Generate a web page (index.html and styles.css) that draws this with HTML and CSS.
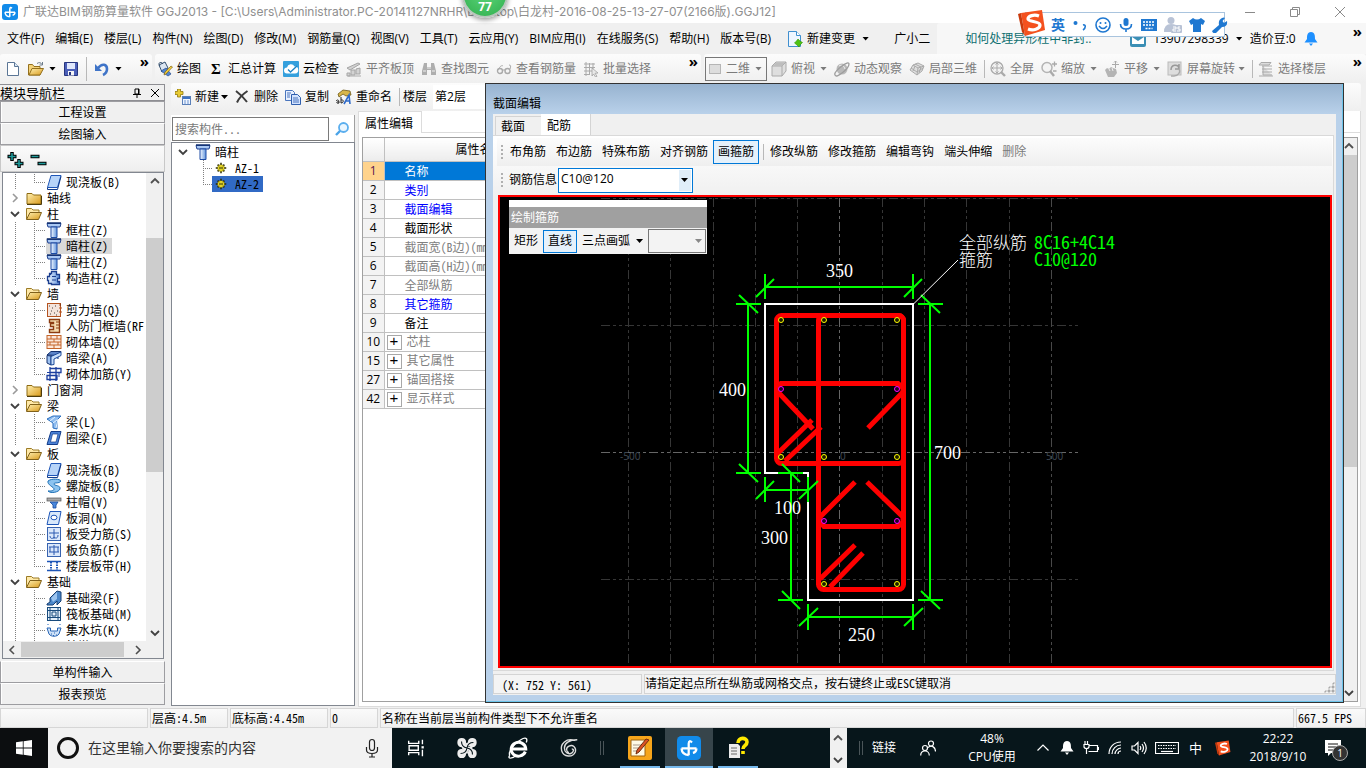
FILE: index.html
```html
<!DOCTYPE html>
<html lang="zh-CN">
<head>
<meta charset="utf-8">
<title>广联达BIM钢筋算量软件 GGJ2013</title>
<link rel="stylesheet" href="styles.css">
</head>
<body>
<svg class="defs" aria-hidden="true">
  <defs>
    <linearGradient id="gold" x1="0" y1="0" x2="1" y2="1"><stop offset="0" stop-color="#fff0b0"/><stop offset="1" stop-color="#d99a1c"/></linearGradient>
    <linearGradient id="steel" x1="0" y1="0" x2="1" y2="0"><stop offset="0" stop-color="#f4f9ff"/><stop offset="1" stop-color="#5f93dc"/></linearGradient>
  </defs>
  <symbol id="app" viewBox="0 0 16 16"><rect width="16" height="16" rx="3" fill="#118bea"/><path d="M3 8.300h10M10 4.300Q8 2.300 7.800 5v7.800M3 8.300q.3 4.200 4.800 4.500M13 8.300q-.2 2.600-2.400 3" fill="none" stroke="#fff" stroke-width="1.500"/></symbol>
  <symbol id="doc" viewBox="0 0 16 16"><path d="M2.500 1.500h7l4 4v9h-11z" fill="#fff" stroke="#5b7696"/><path d="M9.500 1.500v4h4" fill="#dbe8f5" stroke="#5b7696"/></symbol>
  <symbol id="docadd" viewBox="0 0 16 16"><path d="M1.500.5h8l4 4v11h-12z" fill="#eef6ff" stroke="#3f8fcf"/><path d="M9.500.5v4h4" fill="#fff" stroke="#3f8fcf"/><path d="M11 8l2 2 2.500 1.500-2 2-1.500 2.500-2-2L7.500 12l2-2z" fill="#4fc213" stroke="#2c9400" stroke-width=".6"/></symbol>
  <symbol id="open" viewBox="0 0 16 16"><path d="M.5 14V3.500h4l1.500 2h6V14z" fill="#f4d37a" stroke="#94701d"/><path d="M1 14l3-6.500h11.500L12 14z" fill="url(#gold)" stroke="#94701d"/><path d="M9 2.500c2-1.500 4-1 5 1M14.500 1v3h-3" fill="none" stroke="#6b7b8a"/></symbol>
  <symbol id="save" viewBox="0 0 16 16"><path d="M1.500 1.500h13v13h-13z" fill="#4b5fb8" stroke="#27357e"/><path d="M4 2h8v6H4z" fill="#dfe7fb"/><path d="M5 10h6v4.500H5z" fill="#f5f5f5"/><path d="M6 11h2v3H6z" fill="#27357e"/></symbol>
  <symbol id="undo" viewBox="0 0 16 16"><path d="M4 7c4-5 9-4 9 1 0 3-2 5-4 6" fill="none" stroke="#3f74c8" stroke-width="2.600"/><path d="M1 3v7h7z" fill="#3f74c8"/></symbol>
  <symbol id="draw" viewBox="0 0 16 16"><path d="M2 4l6-3 3 6-6 4z" fill="#dce6f2" stroke="#35506f"/><path d="M3 5c-3-3 1-5 3-2" fill="none" stroke="#35506f"/><path d="M4 10l5-3 5 6-3 2z" fill="#5185cf" stroke="#2b4e8e" stroke-width=".7"/><path d="M15.500 6L9 13l-2 1 1-3 6-6z" fill="#f2cf3a" stroke="#80631a" stroke-width=".7"/></symbol>
  <symbol id="cloud" viewBox="0 0 16 16"><rect width="16" height="16" rx="1" fill="#35a0dd"/><path d="M4 12.500a3 3 0 0 1 0-6 4 4 0 0 1 7.500-1 3.500 3.500 0 0 1 .5 7z" fill="#fff"/><path d="M5 8.500l2.500 2.500L14 5" fill="none" stroke="#1c84c6" stroke-width="1.300"/></symbol>
  <symbol id="level" viewBox="0 0 16 16"><path d="M1 7l11-5 2 1-10 6zM5 9h4v5H5zM10 8l4-1v6h-4zM1 12h3v3H1z" fill="#d2d2d2" stroke="#a5a5a5"/><path d="M2 15h13" stroke="#aaa"/></symbol>
  <symbol id="bino" viewBox="0 0 16 16"><path d="M3 2h3v4h4V2h3l2 8v4h-5V9H6v5H1v-4z" fill="#aeaeae"/><path d="M2 10h3M11 10h3M6 7h4" stroke="#eee"/></symbol>
  <symbol id="glass" viewBox="0 0 16 16"><path d="M2 9c2-4 4-5 5-4M14 8c1-3 1-4-1-4" stroke="#aaa" fill="none"/><circle cx="4" cy="10" r="2.500" fill="none" stroke="#aaa" stroke-width="1.400"/><circle cx="11.500" cy="10" r="2.500" fill="none" stroke="#aaa" stroke-width="1.400"/><path d="M6.500 9h2.500" stroke="#aaa"/></symbol>
  <symbol id="batch" viewBox="0 0 16 16"><path d="M1 3h11M1 6.500h11M1 10h8M1 13.500h6M3 1v14M6.500 2v12M10 2v6" stroke="#aaa" fill="none"/><path d="M9 7l6 5-3 .3 2 3-1.500.7-2-3-1.500 2z" fill="#e8e8e8" stroke="#999" stroke-width=".7"/></symbol>
  <symbol id="cube" viewBox="0 0 16 16"><path d="M1 5l4-4h10v9l-4 5H1z" fill="#dedede" stroke="#aaa"/><path d="M1 5h10v10M11 5l4-4" fill="none" stroke="#aaa"/><path d="M2 5l3-3.500h9L11 5z" fill="#bdbdbd"/></symbol>
  <symbol id="orbit" viewBox="0 0 16 16"><circle cx="8" cy="8" r="5.500" fill="#b9b9b9"/><path d="M5 5c3-2 5 0 6 3" fill="none" stroke="#eee"/><path d="M1 14c-1-2 3-6 7-9s7-4 7-2-3 6-7 9-6 4-7 2z" fill="none" stroke="#9d9d9d" stroke-width="1.300"/></symbol>
  <symbol id="part" viewBox="0 0 16 16"><path d="M1 9l3-5 5-2 6 3-2 5-5 4z" fill="#dedede" stroke="#aaa"/><path d="M4 4l5 3 6-2M9 7l-1 7M2 7l6 4 6-4M6 3l6 3-2 6M4 10l2-5" fill="none" stroke="#aaa"/></symbol>
  <symbol id="full" viewBox="0 0 16 16"><circle cx="7" cy="7" r="6" fill="#f2f2f2" stroke="#aaa" stroke-width="1.300"/><path d="M7 2v10M2 7h10M5.500 3.500L7 2l1.500 1.500M5.500 10.500L7 12l1.500-1.500M3.500 5.500L2 7l1.500 1.500M10.500 5.500L12 7l-1.500 1.500" fill="none" stroke="#aaa"/><path d="M11 11l4 4" stroke="#aaa" stroke-width="2.400"/></symbol>
  <symbol id="zoomi" viewBox="0 0 16 16"><circle cx="6" cy="6.500" r="5" fill="#f4f4f4" stroke="#b4b4b4" stroke-width="1.500"/><path d="M9 10l4 5" stroke="#aaa" stroke-width="2.400"/><path d="M11 3h5M13.500.5v5M12 10h3.500" stroke="#aaa" stroke-width="1.300"/></symbol>
  <symbol id="hand" viewBox="0 0 16 16"><path d="M1 9l2-2 2 1 2-2 2 1 3 1 1 4-3 4H4z" fill="#b4b4b4"/><path d="M11.500 0v7M8 3.500h7M10 1.500L11.500 0 13 1.500" fill="none" stroke="#aaa"/><path d="M5 8l1 2M8 7l1 3" stroke="#eee"/></symbol>
  <symbol id="rot" viewBox="0 0 16 16"><rect x="1" y="1" width="13" height="13" fill="#ddd" stroke="#bbb"/><path d="M4 9c0-6 7-6 8-2M12 3v5H8" fill="none" stroke="#999" stroke-width="1.500"/><path d="M12 8c2 3-1 7-5 7H4" fill="none" stroke="#aaa" stroke-width="1.300"/></symbol>
  <symbol id="floors" viewBox="0 0 16 16"><path d="M3 1.500h10L11 4H1zM4 5h10M4 8h10M4 11h10M5 5v9h9" fill="#ddd" stroke="#aaa"/><path d="M1 15h14" stroke="#aaa"/></symbol>
  <symbol id="new" viewBox="0 0 16 16"><path d="M2.500 0h3v2.500H8v3H5.500V8h-3V5.500H0v-3h2.500z" fill="#e9cb34" stroke="#91780e" stroke-width=".8"/><rect x="7.500" y="7.500" width="8" height="8" fill="#eef4ff" stroke="#5a7fb8"/><path d="M8 9h7" stroke="#3c72c4" stroke-width="2"/><path d="M9 12h2M12 12h2M9 14h2M12 14h2" stroke="#6d94cf"/></symbol>
  <symbol id="del" viewBox="0 0 16 16"><path d="M2 2c4 3 8 7 11 11M13.500 2C9 5 5 9 3 13.500" fill="none" stroke="#3c3c3c" stroke-width="2"/></symbol>
  <symbol id="copy" viewBox="0 0 16 16"><path d="M.5 1.500h7l2 2v8h-9z" fill="#e8f0ff" stroke="#4a75bd"/><path d="M6.500 5.500h6l3 3v7h-9z" fill="#d3e3ff" stroke="#2f5fae"/><path d="M2 4h4M2 6h3M2 8h3M8 9h5M8 11h6M8 13h6" stroke="#4a75bd"/></symbol>
  <symbol id="ren" viewBox="0 0 16 16"><path d="M2 5l5-4 7 1 1 4-5 1-3-2-4 3z" fill="#d8b64a" stroke="#6d5816" stroke-width=".8"/><path d="M0 12c2-2 3-1 3 2-3 1-3-2 0-1M5 8v6c3 0 3-4 0-3" fill="none" stroke="#222"/><path d="M8 15l5-9 1 9M10 12h4" fill="none" stroke="#2e6ac9" stroke-width="1.600"/></symbol>
  <symbol id="mag" viewBox="0 0 16 16"><path d="M2 14l5-5" stroke="#4aa3e8" stroke-width="2.400"/><circle cx="9.500" cy="6.500" r="4.500" fill="#eaf6ff" stroke="#5aaeee" stroke-width="1.800"/></symbol>
  <symbol id="fold" viewBox="0 0 16 16"><path d="M1 3.500h5l1.500 1.500h7.500v9H1z" fill="url(#gold)" stroke="#8d6a12"/><path d="M1 14.500h14.500V6" fill="none" stroke="#4d3b0c"/></symbol>
  <symbol id="foldo" viewBox="0 0 16 16"><path d="M.5 13V2.500h5L7 4h6v3" fill="#ffe9a8" stroke="#9b7b26"/><path d="M.5 13.500L4 6.500h11.500L12.500 13.500z" fill="url(#gold)" stroke="#80611a"/></symbol>
  <symbol id="chev" viewBox="0 0 10 10"><path d="M1 3l4 4 4-4" fill="none" stroke="#404040" stroke-width="1.800"/></symbol>
  <symbol id="chevu" viewBox="0 0 10 10"><path d="M1 7l4-4 4 4" fill="none" stroke="#505050" stroke-width="1.800"/></symbol>
  <symbol id="chevr" viewBox="0 0 10 10"><path d="M3 1l4 4-4 4" fill="none" stroke="#9a9a9a" stroke-width="1.600"/></symbol>
  <symbol id="chevl" viewBox="0 0 10 10"><path d="M7 1L3 5l4 4" fill="none" stroke="#505050" stroke-width="1.600"/></symbol>
  <symbol id="col" viewBox="0 0 16 16"><path d="M1 1.500h14l-1 3.500H2z" fill="#a9c8f3" stroke="#1c3f8f"/><path d="M5 5h6v10.500H5z" fill="url(#steel)" stroke="#1c4ba5"/><path d="M1 1h14" stroke="#12306f" stroke-width="1.500"/></symbol>
  <symbol id="gcol" viewBox="0 0 16 16"><path d="M5.500 1.500h5v3h3v4h-2v3h2v3h-8v-1h-3v-3h-1v-4h2v-3h2z" fill="url(#steel)" stroke="#1c3f8f" stroke-width="1.300"/><path d="M6 6.500h4M6 10h4M3 4.500h2M11 12h3" stroke="#1c3f8f"/></symbol>
  <symbol id="slab" viewBox="0 0 16 16"><path d="M5 1.500h10L11.500 13.500H1.500z" fill="#b7d4f8" stroke="#1e56b8"/><path d="M1.500 13.500v2h10l3.500-13" fill="none" stroke="#123c8a"/></symbol>
  <symbol id="wall" viewBox="0 0 16 16"><rect x="1.500" y="1.500" width="13" height="13" fill="#f4e4dc" stroke="#b5531f"/><path d="M3 4h1M6 6h1M9 4h1M5 9h1M8 11h1M4 12h1M11 9h1M10 13h1" stroke="#444"/><path d="M14 1v3h1M13 6h3M13 10h3" stroke="#b5531f"/></symbol>
  <symbol id="rfw" viewBox="0 0 16 16"><path d="M3.500 1.500h10v13h-10v-3h4v-3h-3v-3h3v-1h-4z" fill="#f5dcae" stroke="#8c3c11" stroke-width="1.400"/><path d="M10 4h3M10 7h3M10 10h3" stroke="#8c3c11"/></symbol>
  <symbol id="brick" viewBox="0 0 16 16"><rect x="1" y="1.500" width="14" height="13" fill="#fbe7da" stroke="#c4642a"/><path d="M1 5h14M1 8h14M1 11h14M5 2v3M11 2v3M8 5v3M4 8v3M12 8v3M8 11v3" stroke="#c4642a"/></symbol>
  <symbol id="beam" viewBox="0 0 16 16"><path d="M1 5l4-3.500h10l-3 4z" fill="#5c84c8" stroke="#14316e"/><path d="M1 5.500l4 .5v9l-4-2zM5 6l7-.5V9" fill="#9ec2f2" stroke="#14316e"/><path d="M5 6.500l10-4.500v3.500L8 9v5.500l-3 .5z" fill="#c8defa" stroke="#1d4a9a"/></symbol>
  <symbol id="rein" viewBox="0 0 16 16"><path d="M4 2.500h11v4H4zM1 9.500h10v4H1zM4 1v14M10 1v14" fill="none" stroke="#1c3f9f" stroke-width="1.300"/><path d="M1 6.500h14M13 6v5" stroke="#1c3f9f"/></symbol>
  <symbol id="beam2" viewBox="0 0 16 16"><path d="M1 5l6-3h8l-4 4v9l-4-1V9L4 7z" fill="#8fbdf0" stroke="#2a6fc0"/><path d="M7 9l4-3M4 7l5-4M12 5l-2 9" stroke="#e8f4ff"/></symbol>
  <symbol id="ring" viewBox="0 0 16 16"><path d="M5 1.500h10L11.500 14.500H1z" fill="#4b82d6" stroke="#123c8a"/><path d="M6.500 4h5.500l-2 8H4.500z" fill="#fff" stroke="#123c8a" stroke-width=".7"/></symbol>
  <symbol id="spiral" viewBox="0 0 16 16"><path d="M2 3c4-3 12-2 13 0-2 3-7 1-7 3s7 1 6 5c-1 3-9 5-12 2 3 0 6 0 6-2S1 7 2 3z" fill="#8cc4f0" stroke="#1c6fb5"/></symbol>
  <symbol id="cap" viewBox="0 0 16 16"><rect x="1" y="4" width="14" height="3" fill="#a9a9a9" stroke="#555" stroke-width=".7"/><path d="M4 8h8l-2 3v3H7v-3z" fill="#4a88dc" stroke="#174a9c" stroke-width=".8"/></symbol>
  <symbol id="hole" viewBox="0 0 16 16"><path d="M4 1.500h11L12.500 14.500H1z" fill="#d8e8fb" stroke="#1e56b8"/><ellipse cx="8" cy="7.500" rx="3" ry="2.300" fill="#fff" stroke="#1e56b8"/></symbol>
  <symbol id="sbar" viewBox="0 0 16 16"><rect x="1.500" y="1.500" width="13" height="13" fill="#dbe8fb" stroke="#3763b0"/><path d="M3 7h10M8 3v10M4 10c0 3 3 3 4 1M12 9c0 3-2 4-4 2" fill="none" stroke="#2a58b0"/></symbol>
  <symbol id="nbar" viewBox="0 0 16 16"><rect x="1.500" y="1.500" width="13" height="13" fill="#dbe8fb" stroke="#3763b0"/><path d="M3 5h10M3 10h10M8 3v10M4 5v5M12 5v5" stroke="#2a58b0"/></symbol>
  <symbol id="strip" viewBox="0 0 16 16"><path d="M1 3.500h14M1 12.500h14" stroke="#1e56b8" stroke-width="1.600"/><path d="M5 4v8M11 4v8" stroke="#1e56b8" stroke-width="2" stroke-dasharray="1.500 1"/></symbol>
  <symbol id="fbeam" viewBox="0 0 16 16"><path d="M1 14l3-2V8l7-7 4 1v9l-4 4v-4l-4 4H1z" fill="#4b87c9" stroke="#173f73"/><path d="M5 8l6-6v7l-4 3z" fill="#9cc4ee"/></symbol>
  <symbol id="raft" viewBox="0 0 16 16"><rect x="1.500" y="1.500" width="13" height="13" fill="#e3effa" stroke="#174a7c"/><path d="M4 2v12M12 2v12M2 4.500h12M2 11.500h12M6 6h4v4H6z" fill="none" stroke="#174a7c"/></symbol>
  <symbol id="pit" viewBox="0 0 16 16"><path d="M1 6h3.500v3h7V6H15l-2 6c-2 3-8 3-10 0z" fill="#cfe2f8" stroke="#2865b5"/><path d="M5 12h1M8 11h1M10 13h1M7 13.500h1" stroke="#2865b5"/><path d="M1 2.500h2M13 2.500h2" stroke="#8cb0dd"/></symbol>
  <symbol id="gear" viewBox="0 0 16 16"><path d="M8 1v14M1 8h14M3.500 3.500l9 9M12.500 3.500l-9 9" stroke="#2a2a00" stroke-width="2"/><circle cx="8" cy="8" r="4.500" fill="#ffee2e" stroke="#5a5200" stroke-width=".8"/><path d="M6.500 6v4M9.500 6v4M6 8h4" stroke="#1b1b00" stroke-width=".9"/></symbol>
  <symbol id="bell" viewBox="0 0 16 16"><path d="M8 1c4 0 4 4 4 7l2.500 3.500H1.500L4 8c0-3 0-7 4-7zM6 12.500h4L8 15z" fill="currentColor"/></symbol>
  <symbol id="sogou" viewBox="0 0 28 28"><path d="M3 4l21-3 3 20-20 6z" fill="#f4511e"/><path d="M3 4l4 23-3-4L0 5z" fill="#c93a0c"/><path d="M21 7c-5-2-11 0-11 3s12 2 12 6-7 6-12 4" fill="none" stroke="#fff" stroke-width="3.200"/></symbol>
</svg>

<header class="titlebar">
  <svg class="i16"><use href="#app"/></svg>
  <h1>广联达BIM钢筋算量软件 GGJ2013 - [C:\Users\Administrator.PC-20141127NRHR\Desktop\白龙村-2016-08-25-13-27-07(2166版).GGJ12]</h1>
  <div class="winctl">
    <button aria-label="最小化"><svg viewBox="0 0 12 12"><path d="M1 6.500h10"/></svg></button>
    <button aria-label="还原"><svg viewBox="0 0 12 12"><path d="M1.500 3.500h7v7h-7zM3.500 3V1.500h7v7H9"/></svg></button>
    <button aria-label="关闭"><svg viewBox="0 0 12 12"><path d="M1 1l10 10M11 1L1 11"/></svg></button>
  </div>
  <div class="ball">77</div>
</header>

<nav class="menubar">
  <button>文件(F)</button><button>编辑(E)</button><button>楼层(L)</button><button>构件(N)</button><button>绘图(D)</button><button>修改(M)</button><button>钢筋量(Q)</button><button>视图(V)</button><button>工具(T)</button><button>云应用(Y)</button><button>BIM应用(I)</button><button>在线服务(S)</button><button>帮助(H)</button><button>版本号(B)</button>
  <button class="tool"><svg class="i16"><use href="#docadd"/></svg>新建变更<i class="caret"></i></button>
  <button class="user">广小二</button>
  <div class="news"><a href="#news">如何处理异形柱中非封..</a></div>
  <div class="account">
    <svg class="i16" viewBox="0 0 16 16"><rect width="16" height="16" rx="2" fill="#3b8fb5"/><path d="M2 6l6 4 6-4v7H2z" fill="#fff"/></svg>
    <button class="tool phone">13907298339<i class="caret"></i></button>
    <button>造价豆:0</button>
    <svg class="i16 bell"><use href="#bell"/></svg>
    <b class="more">»</b>
  </div>
</nav>

<div class="toolrow">
  <div class="band b1">
    <button class="tool" aria-label="新建工程"><svg class="i16"><use href="#doc"/></svg></button>
    <button class="tool" aria-label="打开"><svg class="i16"><use href="#open"/></svg><i class="caret"></i></button>
    <button class="tool" aria-label="保存"><svg class="i16"><use href="#save"/></svg></button>
    <span class="sep"></span>
    <button class="tool" aria-label="撤销"><svg class="i16"><use href="#undo"/></svg><i class="caret"></i></button>
    <b class="more">»</b>
  </div>
  <div class="band b2">
    <button class="tool"><svg class="i16"><use href="#draw"/></svg>绘图</button>
    <button class="tool"><b class="sigma">Σ</b>汇总计算</button>
    <button class="tool"><svg class="i16"><use href="#cloud"/></svg>云检查</button>
    <button class="tool" disabled><svg class="i16"><use href="#level"/></svg>平齐板顶</button>
    <button class="tool" disabled><svg class="i16"><use href="#bino"/></svg>查找图元</button>
    <button class="tool" disabled><svg class="i16"><use href="#glass"/></svg>查看钢筋量</button>
    <button class="tool" disabled><svg class="i16"><use href="#batch"/></svg>批量选择</button>
    <b class="more">»</b>
  </div>
  <div class="band b3">
    <label class="dim"><span class="chip"></span><select aria-label="视图模式" disabled><option>二维</option></select><i class="caret"></i></label>
    <button class="tool" disabled><svg class="i16"><use href="#cube"/></svg>俯视<i class="caret far"></i></button>
    <button class="tool" disabled><svg class="i16"><use href="#orbit"/></svg>动态观察</button>
    <button class="tool" disabled><svg class="i16"><use href="#part"/></svg>局部三维</button>
    <span class="sep"></span>
    <button class="tool" disabled><svg class="i16"><use href="#full"/></svg>全屏</button>
    <button class="tool" disabled><svg class="i16"><use href="#zoomi"/></svg>缩放<i class="caret far"></i></button>
    <button class="tool" disabled><svg class="i16"><use href="#hand"/></svg>平移<i class="caret far"></i></button>
    <button class="tool tight" disabled><svg class="i16"><use href="#rot"/></svg>屏幕旋转<i class="caret"></i></button>
    <span class="sep"></span>
    <button class="tool" disabled><svg class="i16"><use href="#floors"/></svg>选择楼层</button>
    <b class="more">»</b>
  </div>
</div>

<main class="work">
  <aside class="dock">
    <div class="dockhead"><span>模块导航栏</span>
      <svg viewBox="0 0 10 10"><path d="M3 1h4v5H3zM1 6.500h8M5 7v3M6.500 1v5" fill="none" stroke="#000"/></svg>
      <svg viewBox="0 0 10 10"><path d="M1 1l8 8M9 1L1 9" stroke="#000"/></svg>
    </div>
    <button class="modbtn">工程设置</button>
    <button class="modbtn">绘图输入</button>
    <div class="treetools">
      <svg viewBox="0 0 44 16"><path d="M5 0v9M.5 4.500h9M12 7v9M7.500 11.500h9M23.500 4.500h9M30.500 11.500h9" stroke="#000" stroke-width="3.500"/><path d="M5 1v7M1.500 4.500h7M12 8v7M8.500 11.500h7M24.500 4.500h7M31.500 11.500h7" stroke="#1f9a9a" stroke-width="1.600"/></svg>
    </div>
    <div class="treebox">
      <ul class="tree">
        <li class="leaf last"><svg class="i16"><use href="#slab"/></svg>现浇板(B)</li>
        <li class="grp"><svg class="tw"><use href="#chevr"/></svg><svg class="i16"><use href="#fold"/></svg>轴线</li>
        <li class="grp"><svg class="tw"><use href="#chev"/></svg><svg class="i16"><use href="#foldo"/></svg>柱</li>
        <li class="leaf"><svg class="i16"><use href="#col"/></svg>框柱(Z)</li>
        <li class="leaf"><span class="cur"><svg class="i16"><use href="#col"/></svg>暗柱(Z)</span></li>
        <li class="leaf"><svg class="i16"><use href="#col"/></svg>端柱(Z)</li>
        <li class="leaf last"><svg class="i16"><use href="#gcol"/></svg>构造柱(Z)</li>
        <li class="grp"><svg class="tw"><use href="#chev"/></svg><svg class="i16"><use href="#foldo"/></svg>墙</li>
        <li class="leaf"><svg class="i16"><use href="#wall"/></svg>剪力墙(Q)</li>
        <li class="leaf"><svg class="i16"><use href="#rfw"/></svg>人防门框墙(RF</li>
        <li class="leaf"><svg class="i16"><use href="#brick"/></svg>砌体墙(Q)</li>
        <li class="leaf"><svg class="i16"><use href="#beam"/></svg>暗梁(A)</li>
        <li class="leaf last"><svg class="i16"><use href="#rein"/></svg>砌体加筋(Y)</li>
        <li class="grp"><svg class="tw"><use href="#chevr"/></svg><svg class="i16"><use href="#fold"/></svg>门窗洞</li>
        <li class="grp"><svg class="tw"><use href="#chev"/></svg><svg class="i16"><use href="#foldo"/></svg>梁</li>
        <li class="leaf"><svg class="i16"><use href="#beam2"/></svg>梁(L)</li>
        <li class="leaf last"><svg class="i16"><use href="#ring"/></svg>圈梁(E)</li>
        <li class="grp"><svg class="tw"><use href="#chev"/></svg><svg class="i16"><use href="#foldo"/></svg>板</li>
        <li class="leaf"><svg class="i16"><use href="#slab"/></svg>现浇板(B)</li>
        <li class="leaf"><svg class="i16"><use href="#spiral"/></svg>螺旋板(B)</li>
        <li class="leaf"><svg class="i16"><use href="#cap"/></svg>柱帽(V)</li>
        <li class="leaf"><svg class="i16"><use href="#hole"/></svg>板洞(N)</li>
        <li class="leaf"><svg class="i16"><use href="#sbar"/></svg>板受力筋(S)</li>
        <li class="leaf"><svg class="i16"><use href="#nbar"/></svg>板负筋(F)</li>
        <li class="leaf last"><svg class="i16"><use href="#strip"/></svg>楼层板带(H)</li>
        <li class="grp"><svg class="tw"><use href="#chev"/></svg><svg class="i16"><use href="#foldo"/></svg>基础</li>
        <li class="leaf"><svg class="i16"><use href="#fbeam"/></svg>基础梁(F)</li>
        <li class="leaf"><svg class="i16"><use href="#raft"/></svg>筏板基础(M)</li>
        <li class="leaf"><svg class="i16"><use href="#pit"/></svg>集水坑(K)</li>
        <li class="leaf"><svg class="i16"><use href="#cap"/></svg>柱墩(Y)</li>
      </ul>
      <div class="vbar"><svg><use href="#chevu"/></svg><span class="track"><i class="thumb t-tree"></i></span><svg><use href="#chev"/></svg></div>
      <div class="hbar"><svg><use href="#chevl"/></svg><span class="track"><i class="thumb"></i></span><svg class="dark"><use href="#chevr"/></svg></div>
    </div>
    <button class="modbtn">单构件输入</button>
    <button class="modbtn">报表预览</button>
  </aside>

  <section class="right">
    <div class="band comptools">
      <button class="tool near"><svg class="i16"><use href="#new"/></svg>新建<i class="caret"></i></button>
      <button class="tool"><svg class="i16"><use href="#del"/></svg>删除</button>
      <button class="tool"><svg class="i16"><use href="#copy"/></svg>复制</button>
      <button class="tool"><svg class="i16"><use href="#ren"/></svg>重命名</button>
      <span class="sep"></span>
      <label class="floor" for="floor">楼层</label>
      <select id="floor"><option>第2层</option></select>
    </div>
    <div class="cols">
      <div class="comp">
        <div class="search"><input type="text" placeholder="搜索构件..." aria-label="搜索构件"><button aria-label="搜索"><svg class="i16"><use href="#mag"/></svg></button></div>
        <ul class="ctree">
          <li class="root"><svg class="tw"><use href="#chev"/></svg><svg class="i16"><use href="#col"/></svg>暗柱</li>
          <li class="sub"><span><svg><use href="#gear"/></svg>AZ-1</span></li>
          <li class="sub last"><span class="sel"><svg><use href="#gear"/></svg>AZ-2</span></li>
        </ul>
      </div>
      <div class="props">
        <div class="tabs"><button class="tab">属性编辑</button></div>
        <div class="grid">
          <table>
            <colgroup><col class="cn"><col class="ca"><col></colgroup>
            <thead><tr><th></th><th>属性名称</th><th></th></tr></thead>
            <tbody>
              <tr class="on"><th>1</th><td>名称</td><td></td></tr>
              <tr class="key"><th>2</th><td>类别</td><td></td></tr>
              <tr class="key"><th>3</th><td>截面编辑</td><td></td></tr>
              <tr><th>4</th><td>截面形状</td><td></td></tr>
              <tr class="dis"><th>5</th><td>截面宽(B边)(mm)</td><td></td></tr>
              <tr class="dis"><th>6</th><td>截面高(H边)(mm)</td><td></td></tr>
              <tr class="dis"><th>7</th><td>全部纵筋</td><td></td></tr>
              <tr class="key"><th>8</th><td>其它箍筋</td><td></td></tr>
              <tr><th>9</th><td>备注</td><td></td></tr>
              <tr class="dis sum"><th>10</th><td>芯柱</td><td></td></tr>
              <tr class="dis sum"><th>15</th><td>其它属性</td><td></td></tr>
              <tr class="dis sum"><th>27</th><td>锚固搭接</td><td></td></tr>
              <tr class="dis sum"><th>42</th><td>显示样式</td><td></td></tr>
            </tbody>
          </table>
          <div class="vbar"><svg><use href="#chevu"/></svg><span class="track"><i class="thumb t-prop"></i></span><svg><use href="#chev"/></svg></div>
        </div>
      </div>
    </div>
  </section>

  <section class="dialog" role="dialog" aria-label="截面编辑">
    <h2>截面编辑</h2>
    <div class="dlgbody">
      <div class="dtabs"><button>截面</button><button class="act">配筋</button></div>
      <div class="dpanel">
        <div class="dtool">
          <i class="grip"></i>
          <button>布角筋</button><button>布边筋</button><button>特殊布筋</button><button>对齐钢筋</button><button class="down">画箍筋</button>
          <span class="sep"></span>
          <button>修改纵筋</button><button>修改箍筋</button><button>编辑弯钩</button><button>端头伸缩</button><button disabled>删除</button>
        </div>
        <div class="dtool second">
          <i class="grip"></i>
          <label for="bar">钢筋信息</label>
          <div class="combo"><input id="bar" type="text" value="C10@120"><button aria-label="展开"><i class="caret"></i></button></div>
        </div>
        <div class="canvas">
          <svg class="drawing" role="img" aria-label="柱截面配筋图">
            <g transform="translate(-500 -197)">
              <g class="gridl">
                <path d="M628.500 198V667M670.500 198V667M713.500 198V667M755.500 198V667M797.500 198V667M882.500 198V667M924.500 198V667M966.500 198V667M1009.500 198V667"/>
                <path d="M601 198.500H1079M601 325.500H1079M601 579.500H1079"/>
                <path class="axis" d="M839.500 198V667M601 452.500H1079"/>
                <path class="half" d="M1051.500 198V667"/>
              </g>
              <g class="ruler"><text x="620" y="460">-500</text><text x="840" y="460">0</text><text x="1046" y="460">500</text></g>
              <path class="outline" d="M765 304H913V600H808V473H765Z"/>
              <g class="rebar">
                <rect x="776.500" y="315.500" width="127" height="148" rx="5"/>
                <rect x="818.500" y="315.500" width="85" height="274" rx="5"/>
                <path d="M777 391V388L781 383.500H898L903 388V392L868 428M777 391L813 429"/>
                <path d="M777 454L812 420M785 461L821 427"/>
                <path d="M855 482L820 517V522L824 526.500H898L903 522V517L867 482"/>
                <path d="M820 579L855 545M830 587L863 553"/>
              </g>
              <g class="long">
                <circle cx="781" cy="320" r="2.500"/><circle cx="824" cy="320" r="2.500"/><circle cx="897" cy="320" r="2.500"/>
                <circle cx="781" cy="457" r="2.500"/><circle cx="824" cy="457" r="2.500"/><circle cx="897" cy="457" r="2.500"/>
                <circle cx="824" cy="584" r="2.500"/><circle cx="897" cy="584" r="2.500"/>
              </g>
              <g class="long side">
                <circle cx="781" cy="389" r="2.500"/><circle cx="897" cy="389" r="2.500"/><circle cx="824" cy="521" r="2.500"/><circle cx="897" cy="521" r="2.500"/>
              </g>
              <g class="dimline">
                <path d="M765 287H913M765 274V299M913 274V299M756 297L774 279M904 297L922 279"/>
                <path d="M748 304V473M736 304H761M736 473H761M739 295L758 313M739 464L758 482"/>
                <path d="M930 304V600M918 304H943M918 600H943M921 295L940 313M921 591L940 609"/>
                <path d="M808 617H913M808 604V630M913 604V630M799 626L818 608M904 626L923 608"/>
                <path d="M765 490H808M765 477V502M808 477V502M756 499L774 481M799 499L818 481"/>
                <path d="M791 473V600M778 473H803M778 600H803M782 464L800 482M782 591L800 609"/>
              </g>
              <path class="leader" d="M914 303.500L958 260"/>
              <g class="num"><text x="826" y="277">350</text><text x="719" y="396">400</text><text x="934" y="459">700</text><text x="774" y="514">100</text><text x="761" y="544">300</text><text x="848" y="641">250</text></g>
              <g class="note"><text x="959" y="249">全部纵筋</text><text x="959" y="266">箍筋</text></g>
              <g class="spec"><text x="1034" y="249">8C16+4C14</text><text x="1034" y="266">C10@120</text></g>
            </g>
          </svg>
          <div class="palette">
            <h3>绘制箍筋</h3>
            <div class="prow"><button>矩形</button><button class="down">直线</button><button class="arc">三点画弧<i class="caret"></i></button>
              <label class="pc"><select aria-label="箍筋类型"><option></option></select><i class="caret"></i></label></div>
          </div>
        </div>
      </div>
      <footer class="dstatus"><span class="xy">(X: 752 Y: 561)</span><span class="hint">请指定起点所在纵筋或网格交点，按右键终止或ESC键取消</span></footer>
    </div>
  </section>
</main>

<footer class="status">
  <span class="s1"></span><span class="s2">层高:4.5m</span><span class="s3">底标高:4.45m</span><span class="s4">0</span><span class="s5">名称在当前层当前构件类型下不允许重名</span><span class="s6">667.5 FPS</span>
</footer>

<div class="taskbar">
  <button class="start" aria-label="开始"><svg viewBox="0 0 16 16"><path d="M0 2.300L6.800 1.300V7.600H0zM7.600 1.200L16 0V7.600H7.600zM0 8.400H6.800V14.700L0 13.700zM7.600 8.400H16V16L7.600 14.800z" fill="#fff"/></svg></button>
  <div class="cortana"><i class="ringo"></i><input type="text" placeholder="在这里输入你要搜索的内容" aria-label="搜索"><svg viewBox="0 0 16 20"><rect x="5.500" y="1.500" width="5" height="11" rx="2.500" fill="none" stroke="#222" stroke-width="1.200"/><path d="M2.500 9v3q0 3.500 5.500 3.500t5.500-3.500V9M8 16v3M5 19h6" fill="none" stroke="#222" stroke-width="1.200"/></svg></div>
  <button class="tb" aria-label="任务视图"><svg viewBox="0 0 24 24"><path d="M4 4v3h11V4M4 20v-3h11v3M4.500 9.500h10v5h-10zM19 3v5M19 14v7" fill="none" stroke="#fff" stroke-width="1.500"/><path d="M18 10h2.500v2.500H18z" fill="#fff"/></svg></button>
  <button class="tb" aria-label="浏览器"><svg viewBox="0 0 24 24"><rect x="1.500" y="1" width="9.500" height="10" rx="4.500" fill="#eee"/><rect x="13" y="1" width="9.500" height="10" rx="4.500" fill="#eee"/><rect x="1.500" y="13" width="9.500" height="10" rx="4.500" fill="#eee"/><rect x="13" y="13" width="9.500" height="10" rx="4.500" fill="#eee"/><path d="M8 4v7q0 2 8 2v7M20 8h-7q-2 0-2 8H4" fill="none" stroke="#eee" stroke-width="4"/><path d="M6 5q0 6 6 7t6 7M19 6q-6 0-7 6t-7 6" fill="none" stroke="#07161b" stroke-width="1.200"/></svg></button>
  <button class="tb" aria-label="Internet Explorer"><svg viewBox="0 0 24 24"><path d="M20 16a8 7.500 0 1 1 .5-3H6" fill="none" stroke="#fff" stroke-width="3.200"/><path d="M3 20C0 24 6 24 10 20M15 3c5-3 8-2 6 3M3 20C1 16 8 7 15 3" fill="none" stroke="#fff" stroke-width="1.500"/></svg></button>
  <button class="tb" aria-label="GLODON"><svg viewBox="0 0 24 24"><path d="M19 4C9 0 2 8 4 15s12 8 15 1c1-5-3-8-7-6s-3 6 0 7M21 3C12 3 7 7 7 12s4 7 7 6 4-5 1-5" fill="none" stroke="#ddd" stroke-width="1.500"/></svg></button>
  <i class="dbl"></i>
  <button class="tb run note1" aria-label="记事"><svg viewBox="0 0 24 24"><rect width="24" height="24" rx="2" fill="#f6a51b"/><path d="M3 4h14v16H3z" fill="#fffbe6" stroke="#9c6512"/><path d="M5 9h9M5 12h9M5 15h7" stroke="#a98"/><path d="M21 4L11 16l-3 2 1-4L18 3z" fill="#dc5326" stroke="#6f2b10"/></svg></button>
  <button class="tb run active" aria-label="广联达"><svg viewBox="0 0 16 16"><use href="#app"/></svg></button>
  <button class="tb run" aria-label="帮助"><svg viewBox="0 0 24 24"><path d="M3 8h9l2 2v12H3z" fill="#ececec"/><path d="M5 12h6M5 15h6M5 18h6" stroke="#666"/><path d="M12 7c0-6 9-6 9-1 0 4-4 3-4 7M17 15v3" fill="none" stroke="#ffe900" stroke-width="3.600"/></svg></button>
  <div class="tscroll"><svg><use href="#chevu"/></svg><svg><use href="#chev"/></svg></div>
  <i class="dbl two"></i>
  <span class="links">链接</span>
  <svg class="ppl" viewBox="0 0 16 16"><circle cx="11" cy="3.500" r="2.500"/><circle cx="5" cy="8" r="2.500"/><path d="M.7 15.500c0-6 8.600-6 8.600 0M8 7.500c4-3 7.500 0 7.500 4"/></svg>
  <span class="cpu">48%<br>CPU使用</span>
  <div class="tray">
    <svg viewBox="0 0 16 16"><path d="M2.500 10.500L8 5l5.500 5.500"/></svg>
    <svg class="fillw" viewBox="0 0 16 16"><use href="#bell"/></svg>
    <svg viewBox="0 0 16 16"><path d="M5.500 5.500h9v6h-9M15.500 7v3M2 1v3M4.500 1v3M1 4.500h5v2q0 2-2.500 2T1 6.500zM3.500 9v5"/></svg>
    <svg viewBox="0 0 16 16"><path d="M2 14C2 7 7 2 14 2M5 14c0-5 4-9 9-9M8 14c0-3 3-6 6-6M11 14c0-2 1-3 3-3"/></svg>
    <svg viewBox="0 0 16 16"><path d="M1 6h2.500L7 2.500v11L3.500 10H1zM9 6q1.500 2 0 4M11 4q3 4 0 8M13 2q4.500 6 0 12"/></svg>
    <svg class="kb" viewBox="0 0 24 16"><path d="M.5 2.500h23v11H.5z"/><path d="M3 5.500h18M3 8.500h18" stroke-dasharray="1.500 1"/><path d="M6 11.500h12"/></svg>
  </div>
  <span class="zh">中</span>
  <svg class="sg"><use href="#sogou"/></svg>
  <time class="clock">22:22<br>2018/9/10</time>
  <div class="notif"><svg viewBox="0 0 16 16"><path d="M0 0h16v13H6l-3 3v-3H0z" fill="#fff"/><path d="M3 4h10M3 7h10M3 10h7" stroke="#111"/></svg><b>1</b></div>
</div>

<div class="ime">
  <svg class="logo"><use href="#sogou"/></svg>
  <b>英</b>
  <svg viewBox="0 0 16 16"><circle cx="3.500" cy="6" r="2" class="f"/><path d="M11 8c3-1 3 3 0 5" /></svg>
  <svg viewBox="0 0 16 16"><circle cx="8" cy="8" r="7"/><circle cx="5.500" cy="6" r="1" class="f"/><circle cx="10.500" cy="6" r="1" class="f"/><path d="M4 9q4 5 8 0"/></svg>
  <svg viewBox="0 0 16 16"><rect x="5.500" y="1" width="5" height="8" rx="2.500" class="f"/><path d="M2.500 7q0 5 5.500 5t5.500-5M8 12v3"/></svg>
  <svg viewBox="0 0 16 16"><path class="f" d="M0 2h16v12H0z"/><path d="M2 5h12M2 8h12M4.500 11.500h7" stroke="#fff" stroke-dasharray="2 1"/></svg>
  <svg viewBox="0 0 18 16" class="pale"><circle cx="7" cy="3.500" r="3.500"/><path d="M0 15q0-8 7-8 3 0 5 1H8v7z"/><rect x="7" y="8" width="11" height="8" rx="1"/><path d="M9 10h3v2H9v2h3M16 10h-2v2h2v2h-3" fill="none" stroke="#fff" stroke-width="1"/></svg>
  <svg viewBox="0 0 16 16"><path class="f" d="M4 1q4 3 8 0l4 3-2 4-2-1v8H4V7L2 8 0 4z"/></svg>
  <svg viewBox="0 0 16 16"><path class="f" d="M10 1q2-1 3 0l-2.500 3 1.500 2 3-2q1 6-5 6L4 16q-3 1-4-2l7-6Q6 3 10 1z"/></svg>
</div>
</body>
</html>
```

FILE: styles.css
```css
* { box-sizing: border-box; }
:root {
  --ui: "Open Sans", "Noto Sans CJK SC", sans-serif;
  --song: "Noto Sans Mono CJK SC", "Liberation Serif", "Noto Sans CJK SC", serif;
}
html, body { height: 100%; }
body {
  margin: 0; display: flex; flex-direction: column; position: relative; overflow: hidden;
  background: #f0f0f0; color: #000; font: 12px/16px var(--ui); white-space: nowrap;
}
button, input, select { font: inherit; color: inherit; margin: 0; padding: 0; border: 0; background: none; border-radius: 0; }
button { white-space: nowrap; }
select { appearance: none; opacity: 1; }
ul, h1, h2, h3 { margin: 0; padding: 0; list-style: none; font: inherit; }
svg { display: block; flex: none; }
.defs { position: absolute; width: 0; height: 0; }
.i16 { width: 16px; height: 16px; }
.caret { flex: none; width: 7px; height: 4px; background: currentColor; clip-path: polygon(0 0, 100% 0, 50% 100%); }
.sep { flex: none; width: 1px; height: 18px; background: #b8b8b8; }

/* title bar */
.titlebar { flex: none; position: relative; height: 23px; background: #fff; display: flex; align-items: center; padding: 0 20px 0 2px; gap: 5px; color: #8f8f8f; }
.titlebar h1 { font-family: Inter, "Noto Sans CJK SC", sans-serif; }
.winctl { margin-left: auto; display: flex; gap: 33px; }
.winctl svg { width: 12px; height: 12px; fill: none; stroke: #8a8a8a; }
.winctl button { display: flex; }
.ball { position: absolute; left: 462px; top: -28px; width: 46px; height: 46px; border-radius: 50%; border: 2px solid #b9c6bd; background: radial-gradient(circle at 50% 40%, #5fd77c, #2fae4d); box-shadow: 0 2px 5px #0006; color: #fff; font-weight: bold; text-align: center; padding-top: 25px; z-index: 2; }

/* menu bar */
.menubar { flex: none; height: 31px; display: flex; align-items: center; gap: 11px; padding-left: 7px; }
.tool { display: flex; align-items: center; gap: 4px; height: 22px; }
.menubar .tool:not(.phone) { margin-left: 5px; }
.menubar .caret { margin-left: 3px; }
.user { margin-left: 14px; }
.news { align-self: stretch; display: flex; align-items: center; width: 189px; margin-left: -4px; padding-left: 28px; background: #f7f7f7; border-radius: 3px 0 0 0; }
.news a { color: #0e6f70; text-decoration: none; }
.account { flex: 1; align-self: stretch; display: flex; align-items: center; gap: 7px; margin-left: -11px; padding: 0 4px; background: #f7f7f7; }
.account .bell { color: #1e90ff; }
.more { font-size: 15px; line-height: 12px; margin-left: auto; align-self: flex-start; padding-top: 2px; }

/* main tool bars */
.toolrow { flex: none; height: 29px; display: flex; gap: 3px; }
.band { display: flex; align-items: center; gap: 7px; padding: 0 3px; background: linear-gradient(#fcfcfc, #efefef); border-radius: 3px; }
.band .more { padding-top: 1px; }
.b1 { width: 152px; padding-left: 5px; }
.b1 .tool { gap: 5px; }
.b1 .sep { height: 24px; }
.b2 { width: 546px; padding-left: 2px; }
.b3 { flex: 1; padding: 0 4px 0 1px; }
.b3 .dim { margin-right: -3px; }
.b3 .sep { margin-right: -2px; }
.far { margin-left: 1px; }
.tight { gap: 3px; }
.tight svg { margin-right: 1px; }
button:disabled, .dim, .dim select { color: #7b7b7b; }
.sigma { width: 16px; text-align: center; font: bold 15px/16px "Liberation Serif", serif; }
.dim { display: flex; align-items: center; gap: 5px; width: 62px; height: 24px; padding: 0 4px 0 3px; border: 1px solid #777; }
.dim select { flex: 1; width: 24px; }
.chip { width: 14px; height: 10px; background: #ddd; border: 1px solid #b5b5b5; }

/* work area */
.work { flex: 1; min-height: 0; position: relative; display: flex; gap: 6px; }
.dock { flex: none; width: 165px; display: flex; flex-direction: column; padding-bottom: 2px; font-family: var(--song); }
.dockhead { flex: none; display: flex; align-items: center; height: 17px; margin-top: 1px; padding-right: 4px; gap: 8px; border: 1px solid #8e8e93; border-left: 0; font-size: 13px; line-height: 13px; }
.dockhead span { flex: 1; }
.dockhead svg { width: 10px; height: 10px; }
.modbtn { flex: none; height: 22px; border: 1px solid #9d9da1; border-top-color: #fff; box-shadow: inset 1px 0 #fff; background: #f0f0f0; }
.dockhead + .modbtn { border-top-color: #9d9da1; }
.treetools { flex: none; height: 27px; border: 1px solid #c8c8c8; display: flex; align-items: center; padding: 2px 6px 0; background: linear-gradient(#fbfbfb, #eee); }
.treetools svg { width: 44px; height: 16px; }
.treebox { flex: 1; min-height: 0; margin: 0 1px 2px 2px; display: grid; grid-template: minmax(0, 1fr) 17px / minmax(0, 1fr) 17px; border: 1px solid #828790; background: #fff; }
.tree { overflow: hidden; padding-top: 1px; }
.tree li { height: 16px; display: flex; align-items: center; gap: 4px; overflow: hidden; }
.tree .leaf, .sub {
  --v: repeating-linear-gradient(to bottom, #808080 0 1px, transparent 1px 2px);
  --h: repeating-linear-gradient(to right, #808080 0 1px, transparent 1px 2px);
}
.tree .leaf { padding-left: 43px; background: var(--v) 12px 0 / 1px 100% no-repeat, var(--v) 31px 0 / 1px 100% no-repeat, var(--h) 31px 8px / 11px 1px no-repeat; }
.tree .leaf.last { background-size: 1px 100%, 1px 8px, 11px 1px; }
.tree .cur { display: flex; gap: 4px; padding-right: 4px; background: #d9d9d9; }
.tree .grp { padding-left: 7px; }
.tree .grp .i16 { margin: 0 1px 0 2px; }
.tw { width: 10px; height: 10px; }
.vbar, .hbar { display: flex; align-items: center; gap: 4px; padding: 3px 0; background: #f0f0f0; }
.vbar { flex-direction: column; }
.vbar svg, .hbar svg { width: 10px; height: 10px; }
.hbar { grid-column: 1 / 3; padding: 0 20px 0 4px; }
.hbar .dark { filter: brightness(.5); }
.track { flex: 1; display: flex; width: 100%; }
.vbar .track { flex-direction: column; }
.thumb { background: #cdcdcd; }
.hbar .thumb { width: 95%; height: 15px; }
.t-tree { height: 54%; margin-top: 48px; }
.t-prop { height: 59%; }

.right { flex: 1; min-width: 0; display: flex; flex-direction: column; }
.comptools { flex: none; height: 28px; padding-left: 4px; margin-right: 5px; }
.near { gap: 2px; }
.near svg { margin-right: 2px; }
.near .caret { margin-right: -1px; }
.comptools .sep { margin-right: -4px; }
.floor { margin-right: -1px; }
.comptools select { width: 52px; height: 24px; padding-left: 2px; background: #fff; }
.cols { flex: 1; min-height: 0; display: flex; gap: 3px; }
.comp { flex: none; width: 184px; padding: 4px 0 1px; display: flex; flex-direction: column; }
.search { flex: none; height: 27px; display: flex; align-items: center; gap: 5px; padding: 1px; background: #fff; border-right: 1px solid #a0a0a0; }
.search input { width: 157px; height: 24px; border: 1px solid #7a7a7a; padding: 0 2px; font: 12px var(--song); }
.search input::placeholder { color: #7a7a7a; opacity: 1; }
.ctree { flex: 1; background: #fff; border: 1px solid #828790; padding-top: 1px; font-family: var(--song); }
.ctree li { height: 16px; display: flex; align-items: center; }
.root { padding-left: 6px; }
.root .i16 { margin: 0 4px 0 7px; }
.sub { padding-left: 40px; background: var(--v) 31px 0 / 1px 100% no-repeat, var(--h) 31px 8px / 9px 1px no-repeat; }
.sub.last { background-size: 1px 8px, 9px 1px; }
.sub span { display: flex; align-items: center; gap: 8px; padding: 0 4px 0 3px; }
.sub svg { width: 12px; height: 12px; }
.sel { background: #316ac5; }

.props { flex: 1; min-width: 0; margin-right: 5px; display: flex; flex-direction: column; background: #fff; border: 1px solid #dcdcdc; border-top: 0; font-family: var(--song); }
.tabs { flex: none; height: 22px; border-bottom: 1px solid #dcdcdc; }
.tab { height: 22px; padding: 0 8px 0 6px; background: #fff; border-right: 1px solid #dcdcdc; border-top: 1px solid #dcdcdc; }
.grid { flex: 1; min-height: 0; margin: 4px 2px 4px 3px; border: 1px solid #a0a0a0; display: flex; overflow: hidden; }
.grid table { flex: 1; align-self: flex-start; table-layout: fixed; border-collapse: collapse; width: 100px; }
.grid .vbar { width: 16px; }
.cn { width: 21px; }
.ca { width: 191px; }
.grid tr { height: 19px; }
.grid thead tr { height: 23px; }
.grid th, .grid td { padding: 0; border: 1px solid #c0c0c0; border-width: 0 1px 1px 0; font-weight: normal; line-height: 16px; overflow: hidden; }
.grid th { background: linear-gradient(#fff, #ececec); }
.grid tbody th { font-family: var(--ui); background: #f3f3f3; }
.grid td { padding-left: 20px; }
.on td { background: #0078d7; color: #fff; }
.grid .on th { background: #ffd38c; color: #5b1450; }
.key td { color: #00f; }
.dis td { color: #808080; }
.grid .sum td:nth-child(2) { padding-left: 2px; }
.sum td:nth-child(2)::before { content: "+"; display: inline-block; width: 13px; height: 13px; margin: -1px 5px 0 0; border: 1px solid #a8a8a8; color: #000; font: 15px/10px "Liberation Sans", sans-serif; text-align: center; vertical-align: middle; }

/* section editor dialog */
.dialog { position: absolute; left: 485px; right: 22px; top: 0; bottom: 4px; display: flex; flex-direction: column; padding: 0 7px 7px; border: 1px solid #333; background: linear-gradient(#97b3d0, #b9d1ea 30px); box-shadow: inset -1px -1px #6cc4ea; }
.dialog h2 { flex: none; height: 30px; padding-top: 12px; }
.dlgbody { flex: 1; min-height: 0; display: flex; flex-direction: column; background: #f0f0f0; }
.dtabs { flex: none; height: 21px; display: flex; align-items: flex-end; padding-left: 2px; font-family: var(--song); }
.dtabs button { height: 19px; padding: 0 16px 0 5px; border: 1px solid #d4d4d4; border-width: 1px 0 0 1px; }
.dtabs .act { height: 21px; padding: 0 19px 0 6px; background: #fff; border-width: 0 1px 0 0; }
.dpanel { flex: 1; min-height: 0; display: flex; flex-direction: column; margin-right: 2px; padding: 2px 1px 2px 4px; border: 1px solid #d9d9d9; border-left: 0; background: linear-gradient(#fff, #fff 4px, #f0f0f0 60px); }
.dtool { flex: none; height: 28px; display: flex; align-items: center; padding-left: 4px; background: linear-gradient(#fcfcfc, #efefef); }
.dtool button { height: 24px; padding: 0 4px; border: 1px solid transparent; }
.dtool .sep { margin: 0 1px 0 4px; height: 16px; }
.dtool .grip { width: 2px; height: 15px; margin-right: 2px; background: repeating-linear-gradient(#b0b0b0 0 2px, transparent 2px 4px); }
.dtool .down, .prow .down { background: #e5f1fb; border: 1px solid #0078d7; }
.second { background: none; }
.dtool.second .grip { margin-right: 6px; }
.combo { display: flex; width: 135px; height: 25px; margin-left: 1px; border: 1px solid #0078d7; background: #fff; padding: 1px; }
.combo input { flex: 1; min-width: 0; padding: 0 0 2px 1px; }
.dtool .combo button { width: 12px; padding: 0 2px; height: 21px; display: flex; align-items: center; background: #e0eef9; border: 0; }
.canvas { flex: 1; min-height: 0; position: relative; margin: 1px 0 0 1px; border: 2px solid #f00; background: #000; }
.drawing { position: absolute; width: 100%; height: 100%; }
.gridl path { stroke: #363636; stroke-dasharray: 9 3 3 3 3 3; fill: none; shape-rendering: crispEdges; }
.gridl .axis { stroke: #666; }
.gridl .half { stroke: #484848; }
.ruler text { fill: #3d4650; font: 10px "Noto Sans", sans-serif; }
.outline { fill: none; stroke: #fff; stroke-width: 2; }
.rebar { fill: none; stroke: #f00; stroke-width: 5; }
.long { fill: #1c1c00; stroke: #ff0; }
.side { fill: #200020; stroke: #f0f; }
.dimline { fill: none; stroke: #0f0; stroke-width: 2; }
.leader { stroke: #fff; }
.num text { fill: #fff; font: 18px "Liberation Serif", serif; }
.note text { fill: #fff; font: 300 17px "Noto Sans CJK SC", sans-serif; }
.spec text { fill: #0f0; font: 300 18px "Noto Sans Mono CJK SC", monospace; }
.palette { position: absolute; left: 9px; top: 3px; width: 198px; background: #f3f3f3; border-top: 7px solid #fff; }
.palette h3 { height: 21px; padding: 3px 2px; background: #a0a0a0; color: #fff; }
.prow { display: flex; align-items: center; height: 26px; }
.prow button { height: 23px; padding: 0 4px; border: 1px solid transparent; }
.prow .down { margin-right: 1px; }
.prow .arc { display: flex; align-items: center; gap: 6px; padding-left: 3px; }
.pc { flex: 1; height: 24px; display: flex; align-items: center; padding-right: 3px; margin-right: 1px; border: 1px solid #777; color: #888; }
.pc select { flex: 1; min-width: 0; }
.dstatus { flex: none; height: 24px; display: flex; gap: 2px; padding: 3px 0 1px; font-family: var(--song); }
.dstatus span { border: 1px solid #d4d4d4; line-height: 20px; background: #f4f4f4; white-space: pre; }
.xy { width: 149px; padding-left: 8px; }
.hint { flex: 1; display: flex; justify-content: space-between; align-items: flex-end; }
.hint::after { content: ""; width: 12px; height: 12px; background: radial-gradient(circle, #aaa 1px, transparent 2px) 0 0 / 4px 4px; clip-path: polygon(100% 0, 100% 100%, 0 100%); }

/* application status bar */
.status { flex: none; height: 21px; display: flex; gap: 2px; padding-top: 1px; font-family: var(--song); }
.status span { border: 1px solid #d6d6d6; line-height: 18px; background: linear-gradient(#fafafa, #f0f0f0); padding-left: 1px; }
.s1 { width: 148px; }
.s2 { width: 78px; }
.s3 { width: 98px; }
.s4 { width: 48px; }
.s5 { flex: 1; }
.s6 { width: 70px; }

/* taskbar */
.taskbar { flex: none; height: 40px; display: flex; align-items: center; background: #07161b; color: #fff; }
.start { width: 48px; height: 40px; display: flex; align-items: center; justify-content: center; background: #0c0e10; }
.start svg { width: 16px; height: 16px; }
.cortana { width: 344px; height: 40px; display: flex; align-items: center; gap: 9px; padding: 0 12px 0 9px; background: #f2f2f2; color: #222; }
.ringo { width: 22px; height: 22px; border: 3px solid #111; border-radius: 50%; }
.cortana input { flex: 1; min-width: 0; font-size: 14px; }
.cortana input::placeholder { color: #333; opacity: 1; }
.cortana svg { width: 16px; height: 20px; }
.tb { width: 48px; height: 40px; margin-right: 3px; display: flex; align-items: center; justify-content: center; }
.tb svg { width: 22px; height: 22px; }
.run { position: relative; width: 48px; margin: 0; padding: 0; }
.run svg { width: 24px; height: 24px; }
.run::after { content: ""; position: absolute; left: 4px; right: 4px; bottom: 0; height: 2px; background: #76b9ed; }
.note1 { margin-left: 12px; }
.active { background: #37454b; }
.active::after { left: 0; right: 0; }
.note1 + .active { margin: 0 1px; }
.dbl { width: 4px; height: 14px; margin-left: 4px; border: 1px solid #4a5559; border-width: 0 1px; }
.tscroll { width: 17px; height: 40px; margin-left: auto; background: #f0f0f0; display: flex; flex-direction: column; align-items: center; justify-content: space-between; padding: 5px 0 3px; }
.tscroll svg { width: 10px; height: 10px; }
.two { margin: 0 9px 0 12px; }
.ppl { width: 16px; height: 16px; margin: 0 31px 0 24px; }
.ppl, .tray svg { fill: none; stroke: #fff; stroke-width: 1.200; }
.cpu, .clock { text-align: center; line-height: 18px; }
.cpu { width: 50px; }
.tray { display: flex; align-items: center; gap: 8px; margin: 0 10px 0 18px; }
.tray svg { width: 16px; height: 16px; }
.tray .fillw { stroke: none; color: #fff; }
.tray .kb { width: 24px; }
.zh { font-size: 13px; }
.sg { width: 16px; height: 16px; margin: 0 15px 0 13px; }
.clock { width: 64px; }
.notif { position: relative; margin: 0 25px 0 15px; }
.notif svg { width: 16px; height: 16px; }
.notif b { position: absolute; left: 7px; top: 5px; width: 16px; height: 16px; border-radius: 50%; background: #333; border: 1px solid #aaa; font: 10px/14px var(--ui); text-align: center; }

/* floating input-method bar */
.ime { position: absolute; right: 141px; top: 12px; width: 200px; height: 25px; display: flex; align-items: center; gap: 7px; padding-right: 4px; background: #fff; border: 1px solid #a9c4de; z-index: 3; }
.ime svg { width: 16px; height: 16px; fill: none; stroke: #1f78d1; stroke-width: 1.600; }
.ime .f { fill: #1f78d1; stroke: none; }
.ime .logo { width: 28px; height: 28px; margin: -4px -2px 0 -8px; stroke: none; }
.ime .pale { width: 18px; fill: #b9c3d6; stroke: none; }
.ime b { font-size: 14px; color: #1f78d1; }
```
